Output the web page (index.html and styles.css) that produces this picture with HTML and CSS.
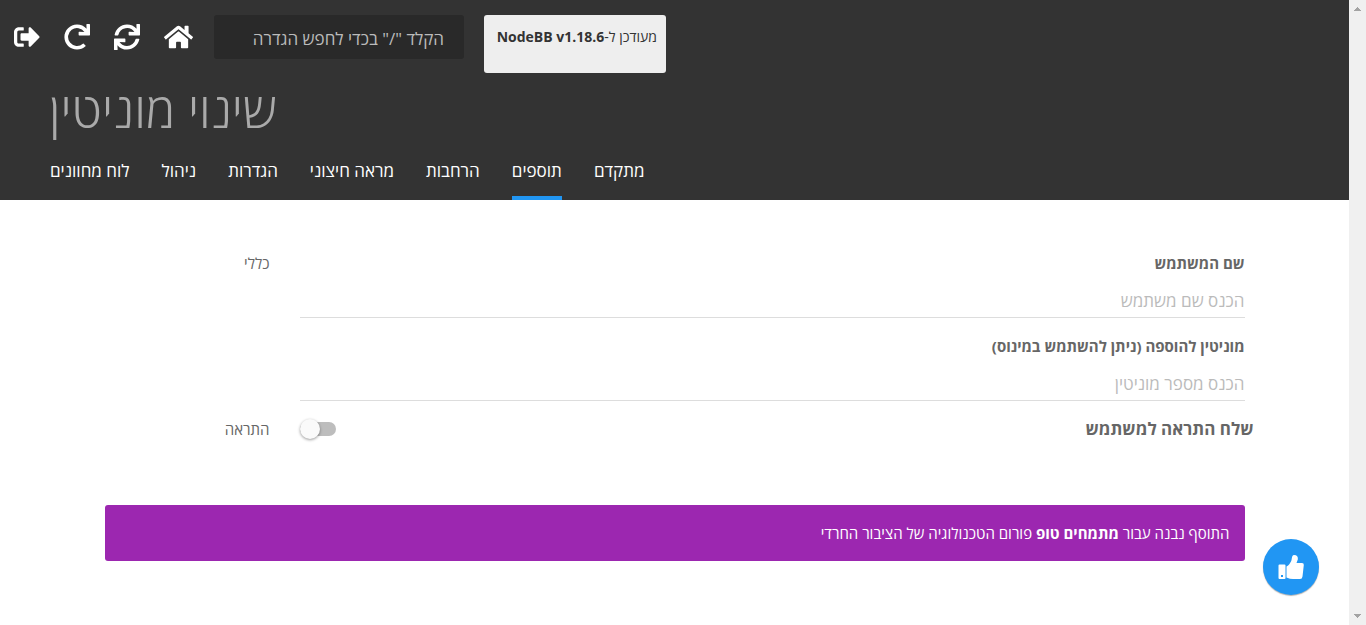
FILE: index.html
```html
<!DOCTYPE html>
<html lang="he">
<head>
<meta charset="utf-8">
<title>שינוי מוניטין</title>
<link rel="stylesheet" href="styles.css">
</head>
<body>
<div class="page">
  <header class="header">
    <div class="toolbar">
      <div class="actions">
        <a href="#" class="action" aria-label="התנתקות"><svg class="icon" viewBox="0 0 512 512"><path d="M497 273L329 441c-15 15-41 4.500-41-17v-96H152c-13.300 0-24-10.700-24-24v-96c0-13.300 10.700-24 24-24h136V88c0-21.400 25.900-32 41-17l168 168c9.300 9.400 9.300 24.600 0 34zM192 436v-40c0-6.600-5.400-12-12-12H96c-17.700 0-32-14.300-32-32V160c0-17.700 14.300-32 32-32h84c6.600 0 12-5.400 12-12V76c0-6.600-5.400-12-12-12H96c-53 0-96 43-96 96v192c0 53 43 96 96 96h84c6.600 0 12-5.400 12-12z"/></svg></a>
        <a href="#" class="action" aria-label="הפעלה מחדש"><svg class="icon" viewBox="0 0 512 512"><path d="M500.330 0h-47.410a12 12 0 0 0-12 12.570l4 82.760A247.420 247.420 0 0 0 256 8C119.340 8 7.900 119.530 8 256.190 8.100 393.070 119.100 504 256 504a247.100 247.100 0 0 0 166.180-63.910 12 12 0 0 0 .48-17.430l-34-34a12 12 0 0 0-16.380-.55A176 176 0 1 1 402.100 157.800l-101.530-4.870a12 12 0 0 0-12.570 12v47.410a12 12 0 0 0 12 12h200.330a12 12 0 0 0 12-12V12a12 12 0 0 0-12-12z"/></svg></a>
        <a href="#" class="action" aria-label="בנייה והפעלה מחדש"><svg class="icon" viewBox="0 0 512 512"><path d="M440.650 12.570l4 82.770A247.160 247.160 0 0 0 255.830 8C134.730 8 33.910 94.920 12.290 209.820A12 12 0 0 0 24.090 224h49.050a12 12 0 0 0 11.670-9.260 175.910 175.910 0 0 1 317-56.940l-101.460-4.860a12 12 0 0 0-12.570 12v47.410a12 12 0 0 0 12 12H500a12 12 0 0 0 12-12V12a12 12 0 0 0-12-12h-47.370a12 12 0 0 0-11.980 12.570zM255.830 432a175.610 175.610 0 0 1-146-77.800l101.800 4.870a12 12 0 0 0 12.570-12v-47.400a12 12 0 0 0-12-12H12a12 12 0 0 0-12 12V500a12 12 0 0 0 12 12h47.350a12 12 0 0 0 12-12.600l-4.150-82.570A247.170 247.170 0 0 0 255.830 504c121.110 0 221.930-86.920 243.550-201.820a12 12 0 0 0-11.800-14.180h-49.050a12 12 0 0 0-11.670 9.260A175.860 175.860 0 0 1 255.830 432z"/></svg></a>
        <a href="#" class="action" aria-label="דף הבית"><svg class="icon icon-wide" viewBox="0 0 576 512"><path d="M280.370 148.260L96 300.110V464a16 16 0 0 0 16 16l112.060-.29a16 16 0 0 0 15.920-16V368a16 16 0 0 1 16-16h64a16 16 0 0 1 16 16v95.640a16 16 0 0 0 16 16.050L464 480a16 16 0 0 0 16-16V300L295.670 148.260a12.190 12.190 0 0 0-15.300 0zM571.600 251.470L488 182.560V44.050a12 12 0 0 0-12-12h-56a12 12 0 0 0-12 12v72.610L318.470 43a48 48 0 0 0-61 0L4.340 251.470a12 12 0 0 0-1.600 16.900l25.500 31A12 12 0 0 0 45.150 301l235.220-193.740a12.190 12.190 0 0 1 15.300 0L530.900 301a12 12 0 0 0 16.900-1.600l25.500-31a12 12 0 0 0-1.700-16.930z"/></svg></a>
      </div>
      <input class="search" type="text" dir="rtl" aria-label="חיפוש הגדרה" placeholder="הקלד &quot;/&quot; בכדי לחפש הגדרה">
      <div class="version" dir="rtl">מעודכן ל-<strong>NodeBB v1.18.6</strong></div>
    </div>
    <h1 class="title">שינוי מוניטין</h1>
    <nav class="menu">
      <a href="#" class="menu-item">לוח מחוונים</a>
      <a href="#" class="menu-item">ניהול</a>
      <a href="#" class="menu-item">הגדרות</a>
      <a href="#" class="menu-item">מראה חיצוני</a>
      <a href="#" class="menu-item">הרחבות</a>
      <a href="#" class="menu-item menu-item-active">תוספים</a>
      <a href="#" class="menu-item">מתקדם</a>
    </nav>
  </header>
  <main class="content">
    <form class="settings">
      <div class="row">
        <div class="section-name">כללי</div>
        <div class="fields">
          <div class="field" dir="rtl">
            <label class="field-label" for="username">שם המשתמש</label>
            <input class="field-input" id="username" type="text" placeholder="הכנס שם משתמש">
          </div>
          <div class="field" dir="rtl">
            <label class="field-label" for="reputation">מוניטין להוספה (ניתן להשתמש במינוס)</label>
            <input class="field-input" id="reputation" type="text" placeholder="הכנס מספר מוניטין">
          </div>
        </div>
      </div>
      <div class="row row-notify">
        <div class="section-name">התראה</div>
        <div class="switch-line">
          <input class="switch" id="notify" type="checkbox">
          <label class="switch-label" for="notify" dir="rtl">שלח התראה למשתמש</label>
        </div>
      </div>
    </form>
    <p class="credit" dir="rtl">התוסף נבנה עבור <strong>מתמחים טופ</strong> פורום הטכנולוגיה של הציבור החרדי</p>
  </main>
</div>
<div class="scrollbar" aria-hidden="true">
  <svg class="scroll-arrow" viewBox="0 0 7 4"><path d="M3 0h1v1h1v1h1v1h1v1H0V3h1V2h1V1h1z"/></svg>
  <svg class="scroll-arrow" viewBox="0 0 7 4"><path d="M0 0h7v1H6v1H5v1H4v1H3V3H2V2H1V1H0z"/></svg>
</div>
<button class="save" type="button" aria-label="שמירה"><svg class="save-icon" viewBox="0 0 26 26"><path fill-rule="evenodd" d="M1.500 10.500h5q1 0 1 1v12.500q0 1-1 1h-5q-1 0-1-1V11.500q0-1 1-1zM3 21v2h2v-2z"/><path d="M8.500 12.500C11 11.500 12 9 13 7.500C14.200 5.500 13.500 1 16 1C19 1 20.300 3 19.800 5.500L18.500 9H24Q26 9 25.800 11L24.500 22.500Q24.200 25 22 25H15Q12 25 8.500 23.500z"/></svg></button>
</body>
</html>
```
FILE: styles.css
```css
* { box-sizing: border-box; }
body {
  margin: 0;
  min-height: 100vh;
  display: grid;
  grid-template-columns: 1fr 17px;
  background: #fff;
  color: #666;
  font-family: "Open Sans", "Noto Sans", sans-serif;
  font-size: 15px;
  line-height: 20px;
}
.header {
  display: flex;
  flex-direction: column;
  height: 200px;
  background: #333;
  color: #fff;
}
.toolbar {
  display: flex;
  align-items: flex-start;
  gap: 20px;
  height: 73px;
  padding: 15px 14px 0;
}
.actions {
  display: flex;
  align-items: center;
  gap: 24px;
  height: 43px;
  padding-right: 1px;
}
.action { display: flex; color: #fff; }
.icon { width: 26px; height: 26px; fill: currentColor; }
.icon-wide { width: 29px; }
.search {
  width: 250px;
  height: 44px;
  padding: 2px 20px 0;
  border: 0;
  border-radius: 3px;
  background: #292929;
  color: #fff;
  font: inherit;
  font-size: 17px;
}
.search::placeholder { color: #bbb; opacity: 1; }
.version {
  height: 58px;
  padding: 12px 9px;
  min-width: 182px;
  border-radius: 3px;
  background: #eee;
  color: #333;
  font-size: 14px;
}
.title {
  margin: 0;
  padding: 0 49px;
  color: #aaa;
  font-size: 49px;
  font-weight: 300;
  line-height: 72px;
}
.menu {
  display: flex;
  gap: 32px;
  margin-top: auto;
  padding: 0 50px;
}
.menu-item {
  height: 41px;
  border-bottom: 4px solid transparent;
  color: #fff;
  font-size: 17px;
  line-height: 24px;
  text-decoration: none;
}
.menu-item-active { border-color: #2196f3; }
.content {
  max-width: 1170px;
  margin: 0 auto;
  padding: 53px 15px 0;
}
.row { display: grid; grid-template-columns: 165px 1fr; gap: 30px; }
.section-name { text-align: right; }
.field { display: flex; flex-direction: column; height: 83px; }
.field-label { font-weight: 700; }
.field-input {
  width: 100%;
  height: 35px;
  margin-top: 10px;
  padding: 0;
  border: 0;
  border-bottom: 1px solid #ddd;
  color: #555;
  background: transparent;
  font: inherit;
  font-size: 17px;
}
.field-input::placeholder { color: #bbb; opacity: 1; }
.switch-line {
  display: flex;
  align-items: center;
  justify-content: space-between;
  height: 20px;
  margin-right: -9px;
}
.switch {
  appearance: none;
  display: flex;
  align-items: center;
  width: 36px;
  height: 14px;
  margin: 0;
  border-radius: 7px;
  background: #bdbdbd;
}
.switch::before {
  content: "";
  width: 20px;
  height: 20px;
  flex: none;
  border-radius: 50%;
  background: #fafafa;
  box-shadow: 0 1px 3px rgba(0, 0, 0, 0.4);
}
.switch-label { font-size: 17px; font-weight: 700; }
.credit {
  margin: 66px 0 0;
  padding: 18px 15px;
  border-radius: 3px;
  background: #9c27b0;
  color: #fff;
}
.scrollbar {
  display: flex;
  flex-direction: column;
  align-items: center;
  justify-content: space-between;
  padding: 7px 0;
  background: #f0f0f0;
}
.scroll-arrow { width: 7px; height: 4px; fill: #a3a3a3; }
.save {
  position: fixed;
  right: 47px;
  bottom: 30px;
  display: flex;
  align-items: center;
  justify-content: center;
  width: 56px;
  height: 56px;
  padding: 0;
  border: 0;
  border-radius: 50%;
  background: #2196f3;
  box-shadow: 0 1px 1px rgba(0, 0, 0, 0.3);
}
.save-icon { width: 26px; height: 26px; fill: #fff; }
```
